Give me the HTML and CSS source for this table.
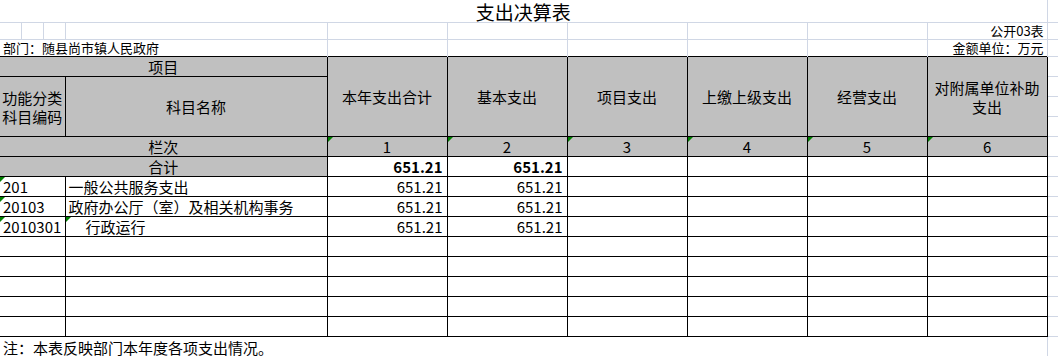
FILE: index.html
```html
<!DOCTYPE html>
<html lang="zh-CN">
<head>
<meta charset="utf-8">
<title>支出决算表</title>
<link rel="stylesheet" href="styles.css">
</head>
<body>
<table class="sheet">
  <colgroup>
    <col class="c-a"><col class="c-b"><col class="c-c"><col class="c-d">
    <col class="c-n"><col class="c-n"><col class="c-n"><col class="c-n"><col class="c-n"><col class="c-n">
    <col class="c-k">
  </colgroup>
  <tr class="r22">
    <td class="g title" colspan="10">支出决算表</td>
    <td class="g"></td>
  </tr>
  <tr class="r17">
    <td class="g"></td><td class="g"></td><td class="g"></td><td class="g"></td>
    <td class="g"></td><td class="g"></td><td class="g"></td><td class="g"></td><td class="g"></td>
    <td class="g small right">公开03表</td>
    <td class="g"></td>
  </tr>
  <tr class="r17">
    <td class="g3 small" colspan="4">部门：随县尚市镇人民政府</td>
    <td class="g3"></td><td class="g3"></td><td class="g3"></td><td class="g3"></td><td class="g3"></td>
    <td class="g3 small right">金额单位：万元</td>
    <td class="g"></td>
  </tr>
  <tr class="r20">
    <td class="h first" colspan="4">项目</td>
    <td class="h" rowspan="4">本年支出合计</td>
    <td class="h" rowspan="4">基本支出</td>
    <td class="h" rowspan="4">项目支出</td>
    <td class="h" rowspan="4">上缴上级支出</td>
    <td class="h" rowspan="4">经营支出</td>
    <td class="h wrap" rowspan="4">对附属单位补助<br>支出</td>
    <td class="g"></td>
  </tr>
  <tr class="r20">
    <td class="h first wrap2" colspan="3" rowspan="3">功能分类<br>科目编码</td>
    <td class="h" rowspan="3">科目名称</td>
    <td class="g"></td>
  </tr>
  <tr class="r20"><td class="g"></td></tr>
  <tr class="r20"><td class="g"></td></tr>
  <tr class="r20">
    <td class="h first" colspan="4">栏次</td>
    <td class="h mark">1</td><td class="h mark">2</td><td class="h mark">3</td>
    <td class="h mark">4</td><td class="h mark">5</td><td class="h mark">6</td>
    <td class="g"></td>
  </tr>
  <tr class="r20">
    <td class="h first" colspan="4">合计</td>
    <td class="d num bold">651.21</td><td class="d num bold">651.21</td>
    <td class="d"></td><td class="d"></td><td class="d"></td><td class="d"></td>
    <td class="g"></td>
  </tr>
  <tr class="r20">
    <td class="d first mark" colspan="3">201</td>
    <td class="d">一般公共服务支出</td>
    <td class="d num">651.21</td><td class="d num">651.21</td>
    <td class="d"></td><td class="d"></td><td class="d"></td><td class="d"></td>
    <td class="g"></td>
  </tr>
  <tr class="r20">
    <td class="d first mark" colspan="3">20103</td>
    <td class="d">政府办公厅（室）及相关机构事务</td>
    <td class="d num">651.21</td><td class="d num">651.21</td>
    <td class="d"></td><td class="d"></td><td class="d"></td><td class="d"></td>
    <td class="g"></td>
  </tr>
  <tr class="r20">
    <td class="d first mark" colspan="3">2010301</td>
    <td class="d mark indent">行政运行</td>
    <td class="d num">651.21</td><td class="d num">651.21</td>
    <td class="d"></td><td class="d"></td><td class="d"></td><td class="d"></td>
    <td class="g"></td>
  </tr>
  <tr class="r20">
    <td class="d first" colspan="3"></td><td class="d"></td>
    <td class="d"></td><td class="d"></td><td class="d"></td><td class="d"></td><td class="d"></td><td class="d"></td>
    <td class="g"></td>
  </tr>
  <tr class="r20">
    <td class="d first" colspan="3"></td><td class="d"></td>
    <td class="d"></td><td class="d"></td><td class="d"></td><td class="d"></td><td class="d"></td><td class="d"></td>
    <td class="g"></td>
  </tr>
  <tr class="r20">
    <td class="d first" colspan="3"></td><td class="d"></td>
    <td class="d"></td><td class="d"></td><td class="d"></td><td class="d"></td><td class="d"></td><td class="d"></td>
    <td class="g"></td>
  </tr>
  <tr class="r20">
    <td class="d first" colspan="3"></td><td class="d"></td>
    <td class="d"></td><td class="d"></td><td class="d"></td><td class="d"></td><td class="d"></td><td class="d"></td>
    <td class="g"></td>
  </tr>
  <tr class="r20">
    <td class="d first" colspan="3"></td><td class="d"></td>
    <td class="d"></td><td class="d"></td><td class="d"></td><td class="d"></td><td class="d"></td><td class="d"></td>
    <td class="g"></td>
  </tr>
  <tr class="r20">
    <td class="note" colspan="10">注：本表反映部门本年度各项支出情况。</td>
    <td class="g"></td>
  </tr>
</table>
</body>
</html>
```
FILE: styles.css
```css
body {
  margin: 0;
  background: #fff;
  color: #000;
  font-family: "Noto Sans CJK SC", "Noto Sans", sans-serif;
}

.sheet {
  border-collapse: collapse;
  table-layout: fixed;
  width: 1058px;
}

.c-a { width: 21px; }
.c-b { width: 22px; }
.c-c { width: 22px; }
.c-d { width: 262px; }
.c-n { width: 120px; }
.c-k { width: 11px; }

.r22 { height: 22px; }
.r17 { height: 17px; }
.r20 { height: 20px; }

td {
  padding: 0 3px;
  font-size: 15px;
  line-height: 19px;
  white-space: nowrap;
  overflow: hidden;
  vertical-align: middle;
}

/* light spreadsheet gridlines */
.g {
  border-right: 1px solid #d0d7e5;
  border-bottom: 1px solid #d0d7e5;
}
.g3 {
  border-right: 1px solid #d0d7e5;
}

.title {
  text-align: center;
  font-size: 19px;
  line-height: 21px;
  overflow: visible;
  padding-top: 1px;
}

.small {
  font-size: 13px;
  line-height: 15px;
  vertical-align: bottom;
  padding-bottom: 1px;
}
.right { text-align: right; }

/* header cells */
.h {
  background: #c0c0c0;
  border: 1px solid #000;
  text-align: center;
}
.wrap { line-height: 19px; }
.wrap2 { line-height: 19px; padding: 0 2px; }

/* data cells */
.d {
  border: 1px solid #000;
  background: #fff;
}
.first { border-left: none; }
.num { text-align: right; padding-right: 4px; }
.bold { font-weight: 700; }
.indent { padding-left: 20px; }

.note {
  border-right: 1px solid #d0d7e5;
  vertical-align: bottom;
}

/* green "number stored as text" markers */
.mark { position: relative; }
.mark::before {
  content: "";
  position: absolute;
  left: 0;
  top: 0;
  border-top: 5px solid #008000;
  border-right: 5px solid transparent;
}
```
